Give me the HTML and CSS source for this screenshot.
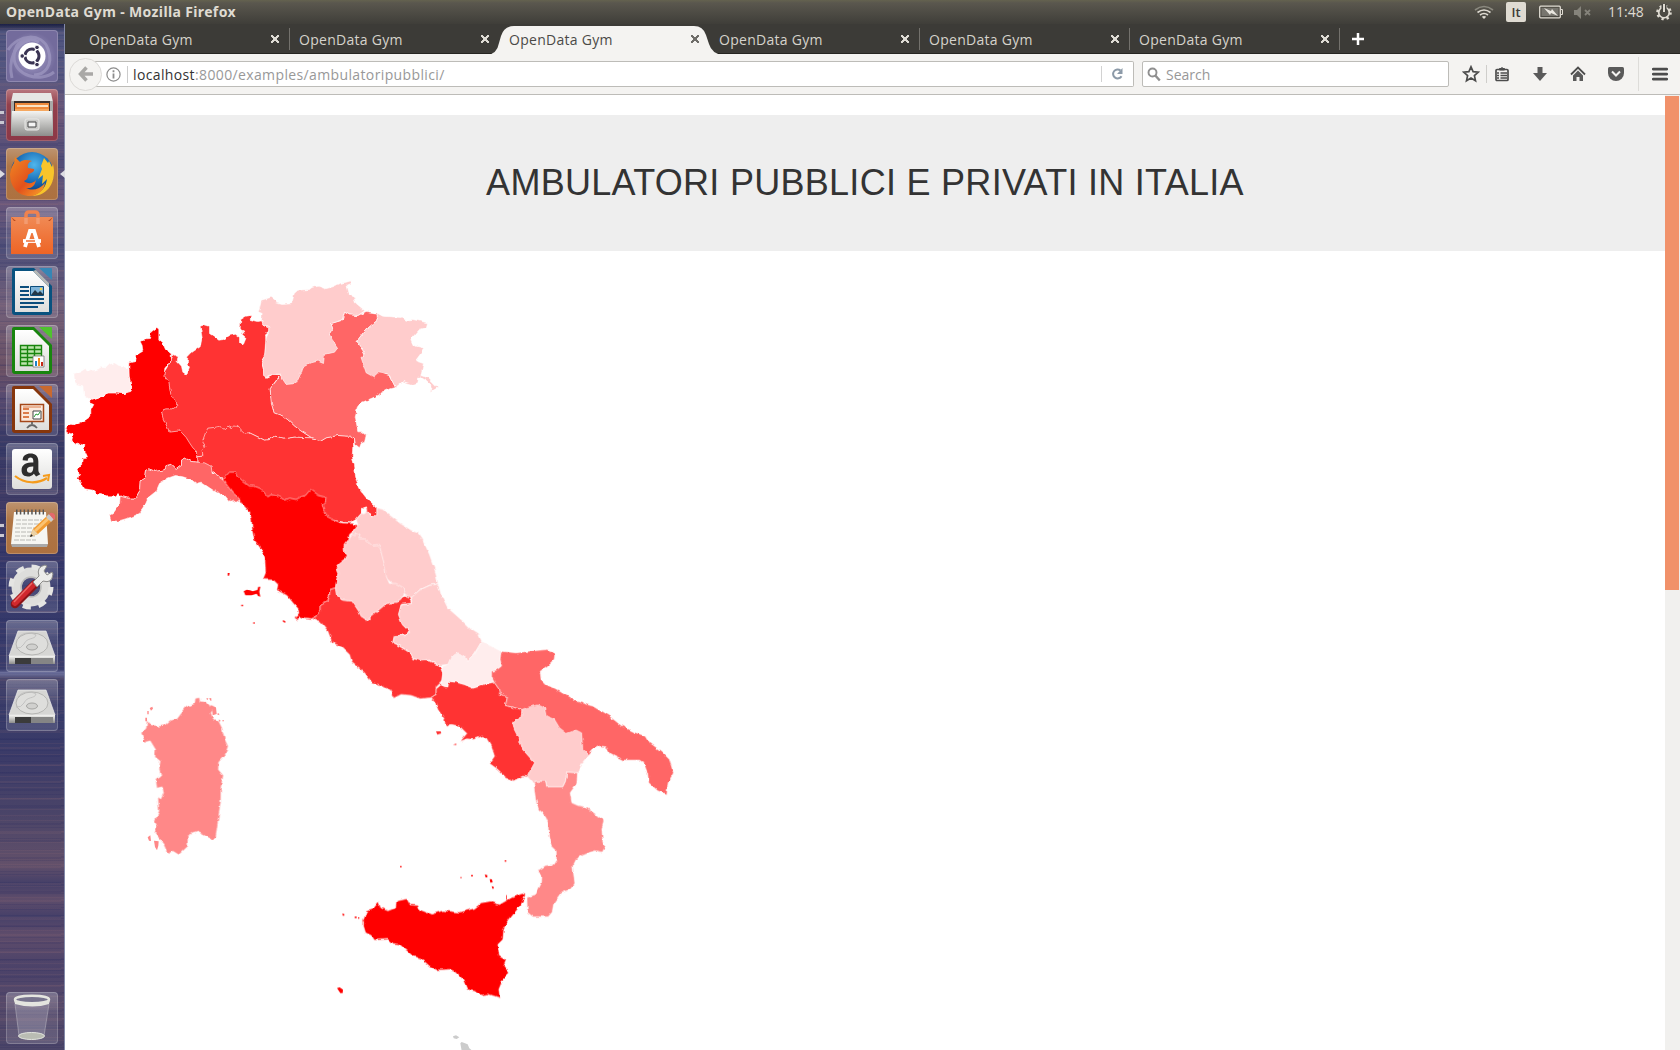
FILE: index.html
```html
<!DOCTYPE html>
<html lang="it">
<head>
<meta charset="utf-8">
<title>OpenData Gym</title>
<link rel="stylesheet" href="styles.css">
</head>
<body>
<svg class="defs" width="0" height="0" aria-hidden="true">
  <defs>
    <linearGradient id="metal" x1="0" y1="0" x2="0" y2="1"><stop offset="0" stop-color="#f4f4f2"/><stop offset="1" stop-color="#8d8d8b"/></linearGradient>
    <linearGradient id="paper" x1="0" y1="0" x2="0" y2="1"><stop offset="0" stop-color="#fff"/><stop offset="1" stop-color="#dededc"/></linearGradient>
    <linearGradient id="bag" x1="0" y1="0" x2="0" y2="1"><stop offset="0" stop-color="#f08a55"/><stop offset="1" stop-color="#ee6425"/></linearGradient>
    <radialGradient id="globe" cx=".55" cy=".3" r=".7"><stop offset="0" stop-color="#4fb6ec"/><stop offset=".6" stop-color="#1567b2"/><stop offset="1" stop-color="#0c2f70"/></radialGradient>
    <linearGradient id="fox" x1="0" y1="0" x2="1" y2="1"><stop offset="0" stop-color="#f08a24"/><stop offset=".55" stop-color="#e2511c"/><stop offset="1" stop-color="#f9a52a"/></linearGradient>
    <symbol id="disk" viewBox="0 0 52 52">
      <path d="M12 11h28l9 25H3z" fill="#d6d6d4" stroke="#eee" stroke-width=".7"/>
      <ellipse cx="26" cy="24" rx="16" ry="11" fill="#dededc" stroke="#b5b5b3"/><ellipse cx="26" cy="27" rx="5.500" ry="3" fill="#d0d0ce" stroke="#a5a5a3"/>
      <path d="M12 18c4-6 13-6 18-3-1 5-9 2-12 9q-3 5-8 4" fill="none" stroke="#bbb" stroke-width=".8"/>
      <path d="M3 36h46v8H3z" fill="url(#metal)"/><path d="M9 38h16v6H9z" fill="#3b3b3b"/><path d="M25 38h22v6H25z" fill="#858585"/>
    </symbol>
    <filter id="rough" x="0" y="0" width="100%" height="100%" color-interpolation-filters="sRGB">
      <feTurbulence type="fractalNoise" baseFrequency=".17" numOctaves="2" seed="4" result="n"/>
      <feDisplacementMap in="SourceGraphic" in2="n" scale="3.6" xChannelSelector="R" yChannelSelector="G"/>
    </filter>
  </defs>
</svg>

<header class="panel">
  <span class="panel-title">OpenData Gym - Mozilla Firefox</span>
  <div class="indicators">
    <svg class="wifi" width="20" height="24" viewBox="0 0 20 24"><g fill="none" stroke="#dfdbd2" stroke-width="1.6"><path d="M1 10q9-7 18 0" stroke="#8b897f"/><path d="M3.500 12.500q6.500-5 13 0M6 15q4-3 8 0"/></g><path d="M7.800 16.800q2.200-1.600 4.400 0L10 19z" fill="#dfdbd2"/></svg>
    <span class="kbd">It</span>
    <svg class="battery" width="24" height="24" viewBox="0 0 24 24"><rect x=".7" y="6.200" width="20.600" height="11.600" rx="1" fill="none" stroke="#dfdbd2" stroke-width="1.300"/><path d="M2.500 8h17v8h-17z" fill="#77756e"/><path d="M22 9.500h1.500v5H22" fill="none" stroke="#dfdbd2"/><path d="M5 8l7 3 1-2 6 7-7-3-1 2z" fill="#e9e6df"/></svg>
    <svg class="mute" width="18" height="24" viewBox="0 0 18 24"><path d="M0 10h3l4-4v13l-4-4H0z" fill="#85837b"/><path d="M11 10l5 5m0-5l-5 5" stroke="#85837b" stroke-width="1.800"/></svg>
    <span class="clock">11:48</span>
    <svg class="session" width="18" height="24" viewBox="0 0 18 24"><circle cx="9" cy="12.500" r="6.300" fill="none" stroke="#dfdbd2" stroke-width="3" stroke-dasharray="2.200 2.748"/><circle cx="9" cy="12.500" r="5.300" fill="none" stroke="#dfdbd2" stroke-width="1.700"/><path d="M9 4v8" stroke="#45443f" stroke-width="5"/><path d="M9 4v8" stroke="#dfdbd2" stroke-width="2"/></svg>
  </div>
</header>

<div class="desktop">
<nav class="launcher">
  <div class="tile dash"><svg viewBox="0 0 52 52"><g fill="none" stroke="#aaa4cb" stroke-width="3" opacity=".55"><path d="M2 20C12 4 36 2 42 19s-4 26-14 26"/><path d="M48 42C35 53 8 46 8 27S25 7 33 12"/><path d="M6 48C2 31 8 14 24 10"/></g><circle cx="26" cy="26" r="13.500" fill="#fff"/><circle cx="26" cy="26" r="7" fill="none" stroke="#3a3453" stroke-width="3" stroke-dasharray="12.800 1.860" stroke-dashoffset="6.400"/><g fill="#3a3453" stroke="#fff" stroke-width="1"><circle cx="16.200" cy="26" r="2.300"/><circle cx="31" cy="17.400" r="2.300"/><circle cx="31" cy="34.600" r="2.300"/></g></svg></div>
  <div class="tile files run2"><svg viewBox="0 0 52 52"><path d="M7 4h38l2 9H5z" fill="#e6e6e4"/><path d="M5 12h42v34H5z" fill="#a9a9a7"/><path d="M8 12h36v12H8z" fill="#3a302c"/><path d="M9 14h34v9H9z" fill="#ee8a3c"/><path d="M11 16h31v2H11z" fill="#fbe3c5"/><path d="M9 20h34v3H9z" fill="#f5a860"/><path d="M6 22h40l1 25H5z" fill="url(#metal)"/><rect x="19" y="30" width="14" height="11" rx="2" fill="#c9c9c7" stroke="#e9e9e7"/><path d="M22 33h8v5h-8z" fill="#f4f4f4" stroke="#444"/></svg></div>
  <div class="tile firefox run1 focus"><svg viewBox="0 0 52 52"><circle cx="26" cy="25.500" r="21.500" fill="url(#globe)"/><path d="M38 10l4 5 1-2 3 6 1-3c4 16-4 32-21 32 10-4 14-9 15-17l-5 5 1-9-5 4 4-10-1-3z" fill="#f8c42a"/><path d="M8 15l1-6 5 5c4-3 8-2 12-1-3 1-5 3-4 7l6 1c1 3-4 4-6 6 0 4-2 5-4 6 3 3 9 3 12-1-1 6-5 9-10 8 6 3 13 2 19-5-1 8-8 13-15 13C12 48 4 39 4 26c0-4 2-8 4-11z" fill="url(#fox)"/></svg></div>
  <div class="tile"><svg viewBox="0 0 52 52"><path d="M20 17V8q0-3 3-3h6q3 0 3 3v9" fill="none" stroke="#f0824e" stroke-width="3.500"/><path d="M5 10h42v37H5z" fill="url(#bag)"/><path d="M5 10l5 4h32l5-4-3 4H8z" fill="#b94a1c"/><path d="M20 17V11m12 6V11" stroke="#f39b70" stroke-width="3.500"/><g fill="none" stroke="#fff" stroke-width="3.800"><path d="M19 40l5-16h4l5 16"/><path d="M17 34h18"/></g><path d="M20 34h9" stroke="#ee6b30" stroke-width="1.500"/></svg></div>
  <div class="tile"><svg viewBox="0 0 52 52"><path d="M8 2h20l18 18v26q0 3-3 3H9q-3 0-3-3V4q0-2 2-2z" fill="#09527f"/><path d="M33 2h12q1 0 1 1v11z" fill="#3686b5"/><path d="M9 5h18l16 16v25H9z" fill="url(#paper)"/><path d="M27 5l16 16V17L30 4z" fill="#b8b8b6"/><path d="M14 21h9M14 25h9M14 29h9M14 33h24M14 37h24M14 41h18" stroke="#0b4d7c" stroke-width="2"/><path d="M24.500 20.500h13v9h-13z" fill="#7fb4d9" stroke="#0b4d7c"/><path d="M25 29l4-5 3 3 2-2 4 4z" fill="#233747"/><circle cx="35" cy="23" r="1.300" fill="#f5d44a"/></svg></div>
  <div class="tile"><svg viewBox="0 0 52 52"><path d="M8 2h20l18 18v26q0 3-3 3H9q-3 0-3-3V4q0-2 2-2z" fill="#18850e"/><path d="M33 2h12q1 0 1 1v11z" fill="#4fc22e"/><path d="M9 5h18l16 16v25H9z" fill="url(#paper)"/><path d="M14.500 20.500h21v20h-21zM14.500 24.500h21m-21 4h21m-21 4h21m-21 4h21M21.500 20v21m7-21v21" fill="#bde5ad" stroke="#18850e" stroke-width="1.400"/><path d="M27 31h11v11H27z" fill="#fff" stroke="#777" stroke-width=".8"/><path d="M29 36h2v5h-2z" fill="#1d83c7"/><path d="M32 33h2v8h-2z" fill="#f08b1c"/><path d="M35 37h2v4h-2z" fill="#c82816"/></svg></div>
  <div class="tile"><svg viewBox="0 0 52 52"><path d="M8 2h20l18 18v26q0 3-3 3H9q-3 0-3-3V4q0-2 2-2z" fill="#86360c"/><path d="M33 2h12q1 0 1 1v11z" fill="#c9692f"/><path d="M9 5h18l16 16v25H9z" fill="url(#paper)"/><path d="M14.500 20.500h23v17h-23z" fill="#fbe9dd" stroke="#a44719" stroke-width="1.500"/><path d="M17 24h6v2h-6zm0 4h6v2h-6zm0 4h6v2h-6z" fill="#dc7c4b"/><path d="M17 23h18" stroke="#dc7c4b"/><path d="M27 27h8v8h-8z" fill="#fff" stroke="#444"/><path d="M28 33l2-3 2 1 2-3" stroke="#2a9b35" fill="none"/><path d="M26 38v2m-5 4q5-6 10 0" fill="none" stroke="#666" stroke-width="1.800"/></svg></div>
  <div class="tile"><svg viewBox="0 0 52 52"><rect x="6" y="6" width="40" height="40" rx="3" fill="url(#paper)"/><path transform="translate(-2.600 -4) scale(1.120)" d="M33 31.500c-1.500-1.500-1.800-2.500-1.800-4.500v-7c0-5-3-7-7-7s-7 2-7 6l4.500.5c0-2 1-3 2.500-3s2.500 1 2.500 3v1.500c-6 0-10.500 1.500-10.500 7 0 4 2.500 5.500 5.500 5.500 2.500 0 4.200-.8 5.500-2.500l2 2.500zM26.700 24.500c0 4-1 5.700-3.200 5.700-1.600 0-2.500-1-2.500-2.700 0-2.500 2.700-3 5.700-3z" fill="#2d2d2d"/><path d="M9 33c10 8 23 8 32 2" fill="none" stroke="#f59b1b" stroke-width="2.200"/><path d="M37 33l6-1-1 6" fill="none" stroke="#f59b1b" stroke-width="2"/></svg></div>
  <div class="tile notes run2"><svg viewBox="0 0 52 52"><path d="M8 10h32l2 32H5z" fill="#f6f6f2"/><path d="M5 42h37l-1 3H6z" fill="#aaa"/><path d="M10 10h28" stroke="#555" stroke-width="5" stroke-dasharray="1.500 2.300"/><path d="M10 18h26M10 22h27M9 26h28M9 30h24M9 34h20M8 38h22" stroke="#b8b8b4" stroke-dasharray="5 1"/><path d="M24 35l3-8 15-14 5 5-15 14z" fill="#f29b31"/><path d="M28 28l15-14 2 2-15 14z" fill="#fbc372"/><path d="M24 35l3-8 5 5z" fill="#ecd2a5"/><path d="M24 35l1-3 2 2z" fill="#222"/><path d="M40 15l3-3 5 5-3 3z" fill="#c9c9c9"/><path d="M43 12q3-3 6 1v4l-1 1z" fill="#e3696b"/></svg></div>
  <div class="tile"><svg viewBox="0 0 52 52"><circle cx="25" cy="26" r="14.500" fill="none" stroke="#dededc" stroke-width="10"/><circle cx="25" cy="26" r="20" fill="none" stroke="#e5e5e3" stroke-width="5" stroke-dasharray="8 7.700"/><circle cx="25" cy="26" r="10" fill="none" stroke="#bcbcba" stroke-width="1.500"/><path d="M9 43L29 23" stroke="#8c1518" stroke-width="8.500" stroke-linecap="round"/><path d="M9 42L28 23" stroke="#d0282d" stroke-width="6" stroke-linecap="round"/><path d="M8 41L26 22" stroke="#e96a66" stroke-width="1.500"/><path d="M27 21L33 15Q30 6 39 4l2 1-3 5 3 4 5-3 1 2q-1 10-10 7l-6 6z" fill="#ececea" stroke="#8b8b89"/></svg></div>
  <div class="tile"><svg viewBox="0 0 52 52"><use href="#disk"/></svg></div>
  <div class="tile"><svg viewBox="0 0 52 52"><use href="#disk"/></svg></div>
  <div class="tile trash"><svg viewBox="0 0 52 52"><path d="M9 10h34l-5 34q-12 4-25 0z" fill="#d7d6e2" opacity=".22"/><path d="M9 12l4 32M43 12l-5 32" stroke="#d8d8dc" opacity=".4"/><ellipse cx="25.500" cy="44" rx="13" ry="3.500" fill="#b9bcb3" stroke="#e3e5df"/><ellipse cx="26" cy="7.500" rx="17" ry="3.800" fill="#77738d" stroke="#e5e6e0" stroke-width="2.500"/><path d="M8 8q18 7 36 0l-1 4q-16 5-34 0z" fill="#e4e5df"/></svg></div>
</nav>

<main class="browser">
  <div class="tabs">
    <div class="tab"><span>OpenData Gym</span><i class="x"></i></div>
    <div class="tab"><span>OpenData Gym</span><i class="x"></i></div>
    <div class="tab active"><svg class="tab-shape" width="236" height="29" viewBox="0 0 236 29"><path d="M0 29Q10 28 12 17L14 10Q17 0 27 0H207Q216 0 219 9L222 18Q225 28 236 29z" fill="#f4f3f1"/></svg><span>OpenData Gym</span><i class="x"></i></div>
    <div class="tab"><span>OpenData Gym</span><i class="x"></i></div>
    <div class="tab"><span>OpenData Gym</span><i class="x"></i></div>
    <div class="tab"><span>OpenData Gym</span><i class="x"></i></div>
    <svg class="newtab" width="14" height="14" viewBox="0 0 14 14"><path d="M7 1v12M1 7h12" stroke="#fff" stroke-width="2.500"/></svg>
  </div>
  <div class="toolbar">
    <div class="back"><svg width="16" height="16" viewBox="0 0 16 16"><path d="M8.500 1.500L2.500 8l6 6.500M3 8h12" fill="none" stroke="#a9a8a6" stroke-width="3.500"/></svg></div>
    <div class="url">
      <svg class="info" width="15" height="15" viewBox="0 0 15 15"><circle cx="7.500" cy="7.500" r="6.600" fill="none" stroke="#8c8c8c" stroke-width="1.200"/><path d="M7.500 6.500v5M7.500 3.200v2" stroke="#8c8c8c" stroke-width="1.800"/></svg>
      <span class="address"><b>localhost</b>:8000/examples/ambulatoripubblici/</span>
      <span class="reload"><svg width="13" height="14" viewBox="0 0 13 14"><path d="M10.500 9.200A4.500 4.500 0 1 1 9.500 3.500" fill="none" stroke="#8c9aa8" stroke-width="2"/><path d="M11.500 1v6H6z" fill="#8c9aa8"/></svg></span>
    </div>
    <div class="search"><svg width="14" height="15" viewBox="0 0 14 15"><circle cx="5.500" cy="5.500" r="4" fill="none" stroke="#8f8f8f" stroke-width="1.900"/><path d="M8.300 8.500l4.500 5" stroke="#8f8f8f" stroke-width="2.400"/></svg><span>Search</span></div>
    <div class="tools">
      <span class="tool star"><svg width="18" height="18" viewBox="0 0 18 18"><path d="M9 1.800l2.100 4.800 5.200.5-3.900 3.500 1.100 5.200L9 13.100l-4.500 2.700 1.100-5.200-3.900-3.500 5.200-.5z" fill="none" stroke="#4c4c4c" stroke-width="1.700"/></svg></span>
      <span class="tool list"><svg width="16" height="16" viewBox="0 0 16 16"><path d="M2 4.500q0-1 1-1h10q1 0 1 1v9q0 1-1 1H3q-1 0-1-1z" fill="none" stroke="#4c4c4c" stroke-width="1.700"/><path d="M5.500 4V2.500h1.500Q8 .3 9 2.500h1.500V4z" fill="#4c4c4c" stroke="#4c4c4c"/><path d="M3 7h2m1.500 0H13M3 9.500h2m1.500 0H13M3 12h2m1.500 0H13" stroke="#4c4c4c" stroke-width="1.300"/></svg></span>
      <span class="tool"><svg width="16" height="16" viewBox="0 0 16 16"><path d="M5.500 1h5v6H15l-7 8-7-8h4.500z" fill="#5a5a5a"/></svg></span>
      <span class="tool"><svg width="16" height="16" viewBox="0 0 16 16"><path d="M1 8.500l7-7 7 7" fill="none" stroke="#4c4c4c" stroke-width="1.800"/><path d="M3 9.500l5-5 5 5V15H9.500v-4h-3v4H3z" fill="#5a5a5a"/></svg></span>
      <span class="tool"><svg width="16" height="16" viewBox="0 0 16 16"><path d="M1.500 1h13q1.500 0 1.500 1.500V7A8 8 0 0 1 0 7V2.500Q0 1 1.500 1z" fill="#5a5a5a"/><path d="M4 5.500L8 9.500l4-4" fill="none" stroke="#f4f3f1" stroke-width="2"/></svg></span>
      <span class="tool menu"><svg width="16" height="15" viewBox="0 0 16 15"><path d="M1.300 2.200h13.400M1.300 7.200h13.400M1.300 12.200h13.400" stroke="#4c4c4c" stroke-width="2.800" stroke-linecap="round"/></svg></span>
    </div>
  </div>

  <div class="viewport">
    <div class="page">
      <div class="jumbotron"><h1>AMBULATORI PUBBLICI E PRIVATI IN ITALIA</h1></div>
      <svg class="map" width="1600" height="799" viewBox="65 251 1600 799">
        <g filter="url(#rough)"><g class="regions" transform="translate(59.500 269.500) scale(.333333)">
          <path class="l5" d="M336 272L340 255 356 262 353 276 366 290 370 308 382 316 390 296 383 285 385 262 398 248 422 232 428 205 422 170 436 166 450 170 450 192 462 200 478 212 492 210 510 198 528 194 540 204 540 220 552 224 560 205 548 195 556 185 542 178 544 150 560 140 574 138 572 150 596 156 607 154 612 165 628 172 628 188 618 196 620 220 615 260 606 275 612 300 614 318 624 323 640 314 662 316 632 358 636 402 644 430 672 440 690 455 706 470 724 484 757 505 740 505 705 503 680 507 645 500 630 510 615 512 597 503 570 490 430 560 412 562 300 500 300 330Z"/>
          <path class="l5" d="M412 562L430 560 428 545 436 530 426 515 430 512 438 490 445 476 462 474 480 470 495 480 505 470 520 478 530 468 545 480 555 490 570 490 597 503 615 512 630 510 645 500 680 507 705 503 757 505 770 508 782 516 800 505 835 498 870 500 885 508 885 527 880 535 878 560 885 585 888 620 897 655 920 685 952 714 953 738 945 744 932 732 920 730 918 712 906 716 906 732 890 750 872 760 855 758 620 720 490 628 412 578Z"/>
          <path class="l6" d="M292 174L298 179 298 212 310 222 318 240 335 253 336 272 316 296 313 320 328 340 334 375 349 398 355 408 340 418 322 418 306 424 310 445 322 470 330 488 362 484 380 504 390 520 400 535 411 545 412 578 395 576 378 566 366 572 366 588 350 600 334 585 322 588 316 600 288 606 268 598 258 603 255 625 242 634 240 665 228 686 205 686 182 680 176 672 165 682 140 682 125 672 112 673 100 662 75 658 66 640 55 628 60 612 52 600 66 590 68 565 84 562 74 540 76 527 62 524 45 524 34 512 38 495 24 488 17 473 34 464 48 467 62 460 80 450 94 440 94 422 103 405 90 400 92 391 125 380 146 370 165 370 192 372 214 362 216 355 208 320 208 280 228 276 232 256 250 245 248 228 242 216 258 208 270 207 274 188Z"/>
          <path class="l1" d="M43 313L60 308 78 297 84 307 118 298 122 293 140 295 150 284 165 280 178 288 190 290 208 298 209 320 216 355 214 366 192 372 165 370 146 370 125 380 92 391 85 386 73 378 70 352 52 348 45 335Z"/>
          <path class="l4" d="M150 738L162 730 180 705 182 680 205 686 228 686 240 665 242 634 255 625 258 603 268 598 288 606 316 600 322 588 334 585 350 600 366 588 366 572 378 566 395 576 412 578 435 580 455 590 458 612 470 615 490 628 515 650 525 670 543 690 530 698 515 690 508 696 495 680 470 668 450 655 425 638 410 642 395 630 370 622 348 618 325 626 300 642 290 665 265 685 252 715 240 732 215 743 175 755 155 754Z"/>
          <g transform="translate(570 0)">
            <path class="l4" d="M95 315L62 358 66 402 74 430 102 440 120 455 136 470 154 484 187 505 200 508 212 516 230 505 265 498 300 500 315 508 318 525 330 535 335 522 345 518 350 498 340 490 325 490 322 465 317 440 325 410 335 400 370 385 410 362 438 354 420 318 400 312 335 265 345 245 322 215 345 185 362 170 384 152 383 131 350 126 325 138 300 136 285 128 278 152 245 162 250 180 240 195Z"/>
            <path class="l2" d="M305 34L302 45 290 50 296 72 312 82 318 100 330 110 346 124 325 138 300 136 285 128 278 152 245 162 250 180 240 195 248 210 265 235 255 248 225 255 222 282 205 275 185 280 160 293 155 310 140 342 110 345 100 330 92 314 70 314 50 323 42 318 42 300 36 275 46 258 48 222 50 205 58 188 58 172 40 164 36 150 38 135 26 130 35 92 50 88 65 83 78 92 78 100 98 105 125 103 130 90 134 72 145 62 180 60 186 55 206 50 228 58 250 52 272 42 290 38Z"/>
            <path class="l2" d="M384 152L383 131 400 140 455 144 470 152 490 150 534 160 530 175 510 180 484 210 492 228 524 236 514 252 498 274 522 282 514 318 535 325 564 355 545 366 548 352 530 335 508 322 505 340 490 345 460 336 438 354 420 318 400 312 385 310 372 322 350 310 335 265 345 245 322 215 345 185 362 170Z"/>
          </g>
          <g transform="translate(420 510)">
            <path class="l6" d="M70 120L90 98 110 98 115 110 130 125 150 140 165 140 185 148 205 172 215 166 240 172 255 182 270 176 290 180 305 172 318 168 333 150 350 162 358 168 380 174 378 188 368 195 372 210 380 230 400 240 425 250 460 252 476 258 465 272 450 285 448 300 434 318 436 340 445 352 415 375 410 385 416 400 408 445 392 450 390 468 385 485 362 498 362 515 350 530 338 538 318 536 300 532 295 542 284 534 298 525 296 508 280 490 262 468 232 452 235 435 222 422 190 420 198 400 196 355 185 330 163 300 158 270 155 235 145 212 123 188 118 175 100 160 85 140Z"/>
            <path class="l5" d="M338 538L350 530 362 515 362 498 385 485 390 468 392 450 408 445 412 470 430 482 458 485 478 515 485 530 503 542 530 518 560 492 590 488 605 478 614 468 630 472 636 492 605 495 598 525 610 555 628 575 620 586 585 590 580 610 600 620 632 640 640 658 665 660 690 665 720 678 730 700 728 722 710 740 710 765 695 775 662 778 635 768 605 765 583 776 570 752 545 738 518 730 495 700 457 670 450 645 425 622 398 610 385 575 365 550Z"/>
            <path class="l2" d="M476 258L470 240 485 222 505 218 520 232 532 225 533 205 550 210 600 250 635 272 657 282 670 300 690 345 706 390 716 433 690 438 660 452 640 475 625 470 614 462 540 400 455 285 465 272Z"/>
            <path class="l2" d="M455 285L470 290 470 280 482 285 478 298 495 298 520 320 540 318 548 350 556 380 560 410 570 432 590 432 612 445 614 462 605 478 590 488 560 492 530 518 503 542 485 530 478 515 458 485 430 482 412 470 408 445 416 400 410 385 415 375 445 352 436 340 434 318 448 300Z"/>
          </g>
          <g transform="translate(960 870)">
            <path class="l2" d="M176 73L150 78 120 92 95 115 97 132 65 137 57 165 68 195 90 215 80 228 45 228 40 250 60 258 92 280 100 295 125 305 150 302 180 318 205 315 263 303 280 290 307 245 298 225 275 210 250 185 205 145 185 105Z"/>
            <path class="l5" d="M186 372L192 380 205 382 207 365 230 368 255 375 280 386 300 380 320 372 344 368 356 385 360 402 384 412 378 438 428 450 425 475 400 488 405 510 420 540 430 570 466 610 452 635 444 652 430 650 402 664 380 655 355 630 330 612 345 590 335 560 320 535 308 530 280 540 262 538 242 546 262 522 240 500 215 495 198 504 195 480 175 450 165 425 155 414 170 405 170 385Z"/>
            <path class="l1" d="M307 245L335 260 364 275 362 300 366 320 350 332 336 335 336 352 344 368 320 372 300 380 280 386 255 375 230 368 207 365 205 382 192 380 186 368 190 345 186 322 205 315 215 292 235 280 255 288 263 303 285 285Z"/>
            <path class="l4" d="M364 275L410 280 450 275 505 270 520 276 526 286 524 300 505 318 482 336 485 360 500 375 540 395 590 425 640 440 690 470 725 498 770 520 800 530 812 550 845 575 870 600 882 640 866 670 862 704 835 694 808 670 804 640 792 610 780 602 730 602 690 582 680 562 660 560 640 570 628 585 560 560 500 480 428 450 378 438 384 412 360 402 356 385 344 368 336 352 336 335 350 332 366 320 362 300Z"/>
            <path class="l2" d="M428 450L440 445 475 436 495 445 500 470 525 480 540 505 562 522 590 512 606 520 610 572 628 585 605 615 594 640 562 638 558 665 550 682 502 682 498 665 468 666 462 672 444 652 452 635 466 610 430 570 420 540 405 510 400 488 425 475Z"/>
          </g>
          <g transform="translate(780 1470)">
            <path class="l3" d="M642 72L648 66 678 65 682 82 730 82 738 65 742 38 774 40 772 72 752 100 757 130 775 138 798 142 830 165 853 184 847 210 850 245 858 262 848 278 825 274 790 288 770 300 760 320 766 372 752 390 725 402 702 435 698 458 686 472 640 472 623 458 622 414 648 405 666 370 667 350 652 335 678 318 700 316 710 300 710 275 695 260 687 230 685 190 675 165 657 150 648 120Z"/>
            <path class="l6" d="M132 480L140 455 160 448 178 426 184 445 205 454 228 445 230 425 262 418 272 436 296 438 300 450 335 464 370 453 420 458 465 446 485 430 512 425 540 435 575 415 608 402 618 406 605 435 570 480 553 510 550 540 535 555 540 590 560 602 553 620 570 640 550 660 538 690 542 716 525 710 505 704 485 708 470 697 442 690 430 660 410 638 390 630 352 632 330 620 305 598 280 590 255 568 240 555 218 552 205 540 165 542 155 528 138 520 132 500Z"/>
          </g>
          <path class="l3" transform="translate(180 1230)" d="M82 122L92 135 118 140 140 135 155 122 172 118 200 82 225 72 228 56 240 54 242 65 258 66 270 80 275 76 288 82 275 100 282 118 298 125 308 145 316 178 326 200 318 225 298 248 297 270 312 288 305 320 304 370 298 410 290 470 280 480 268 475 235 458 220 462 205 470 206 500 178 526 160 515 145 524 130 490 105 460 112 440 105 425 118 395 115 352 124 358 132 340 128 322 112 326 108 298 124 288 118 265 122 245 106 232 108 210 92 184 78 188 68 160 80 145Z"/>
        </g></g>
        <g class="islands" transform="translate(60 270) scale(.333333)">
          <path class="l6" transform="translate(420 510)" d="M131 454L140 449 150 451 158 454 172 450 175 440 181 440 178 455 181 470 174 468 170 461 155 466 136 466zM83 399h6l-2 8h-4zM124 494h5v5h-5zM160 547h4v4h-4zM249 540l7 4-1 5-6-4z"/>
          <path class="l5" transform="translate(960 870)" d="M168 514l14 0 2 6-12 4zM219 554l10-3v4z"/>
          <path class="l6" transform="translate(780 1470)" d="M51 684l8-2 10 7-1 10h-7zM67 461l6 1v5h-5zM104 470h6v4h-6zM114 472h4v4h-4zM128 480h4v3h-4zM240 318h5v4h-5zM554 301h5v4h-5zM453 345h6v4h-6zM421 351h4v3h-4zM494 344l8 1v7h-5zM509 357l7 1 2 9-7 1zM515 378l7 3-1 5h-4zM559 405h2v14h-2z"/>
          <path class="l3" transform="translate(180 1230)" d="M89 84l8-4 2 6-6 6zM82 93h4v10h-4zM76 113h5v11h-5zM69 180h7v6h-7zM83 472l8-6 2 17-6-1zM102 482l14 2-1 13-4 14-6-10zM258 56l7-2-2 6zM268 54l6 1v8l-4-2zM276 80l12 2 2 20-12 4zM290 102l7-2 1 6zM296 118l6 4-3 4zM307 121h5v3h-5z"/>
          <path class="sea" transform="translate(780 1470)" d="M399 829l9-3 10 6-8 5-9-2zM421 850l4-4 18 7 5 12 10 8-2 5h-30z"/>
          <path class="sm" transform="translate(420 510)" d="M484 209l16-7 1 12-10 9-7-3z"/>
        </g>
      </svg>
    </div>
    <div class="scrollbar"><div class="thumb"></div></div>
  </div>
</main>
</div>
</body>
</html>
```

FILE: styles.css
```css
* { box-sizing: border-box; }
html, body { margin: 0; width: 1680px; height: 1050px; overflow: hidden; }
body { font-family: "Open Sans", "Noto Sans", sans-serif; font-size: 14px; background: #fff; }
svg { display: block; }
.defs { position: absolute; }

.panel { height: 24px; display: flex; justify-content: space-between; align-items: center; padding: 0 7px 0 6px; color: #dfdbd2; background: linear-gradient(#64624f 0, #5a574e 3px, #3f3e39 100%); }
.panel-title { font-family: "Noto Sans", sans-serif; font-weight: 700; font-size: 14px; line-height: 24px; letter-spacing: .36px; }
.indicators { display: flex; align-items: center; height: 24px; }
.kbd { width: 20px; height: 20px; margin-left: 12px; border-radius: 2px; background: #dfdbd2; color: #3c3b37; font-size: 13px; line-height: 20px; text-align: center; font-weight: 600; }
.battery { margin-left: 13px; }
.mute { margin-left: 11px; }
.clock { width: 36px; margin-left: 16px; letter-spacing: 0; line-height: 24px; white-space: nowrap; }
.session { margin-left: 11px; }

.desktop { display: flex; height: 1026px; }
.launcher { width: 65px; padding: 6px 0 6px 6px; display: flex; flex-direction: column; gap: 7px; border-right: 1px solid #8389a8;
  background: repeating-linear-gradient(rgba(30,35,90,.14) 0 1px, transparent 1px 4px, rgba(170,120,120,.1) 4px 5px, transparent 5px 11px),
  repeating-linear-gradient(179.5deg, rgba(25,30,90,.12) 0 2px, transparent 2px 9px, rgba(170,120,120,.1) 9px 11px, transparent 11px 17px),
  linear-gradient(#1c2040 0, #50557f 8px, #545680 50px, #6b5778 90px, #504d78 135px, #69577b 180px, #4d4e78 225px, #72607a 280px, #695064 345px, #594b70 370px, #373a66 420px, #3f3b65 480px, #33376a 550px, #393c6b 645px, #7275a0 649px, #45436b 655px, #373b69 690px, #3c3b68 735px, #4a4468 790px, #62506a 840px, #443f68 860px, #5f4d6b 875px, #464069 892px, #5e4c6b 910px, #4b4269 945px, #574a6a 980px, #4b4568 100%); }
.tile { position: relative; flex: none; width: 52px; height: 52px; border-radius: 4px; background: linear-gradient(rgba(255,255,255,.26), rgba(255,255,255,.08) 45%, rgba(255,255,255,.13)); box-shadow: inset 0 0 0 1px rgba(255,255,255,.2); }
.tile > svg { width: 52px; height: 52px; }
.dash { background: radial-gradient(#a9a3cc, #736b9c 65%); }
.files { background: linear-gradient(#b9787f, #93404c 30%, #8c3847); }
.firefox, .notes { background: linear-gradient(#bd9470, #b07645 35%, #ad7140); }
.trash { margin-top: auto; }
.run1::before, .focus::after, .run2::before { content: ""; position: absolute; top: 22px; left: -6px; border: 4px solid transparent; border-left: 5px solid #dcdce2; }
.focus::after { left: auto; right: -7px; border-left: 0; border-right: 5px solid #dcdce2; }
.run2::before { border: 0; width: 4px; height: 7px; border-top: 3px solid #c9c8d2; border-bottom: 3px solid #c9c8d2; }

.browser { width: 1615px; display: flex; flex-direction: column; }
.tabs { height: 30px; padding-left: 15px; display: flex; align-items: center; background: #3c3b37; border-bottom: 1px solid #262521; color: #d6d3cc; }
.tab { position: relative; width: 210px; height: 22px; display: flex; align-items: center; padding: 1px 10px 0 9px; border-right: 1px solid #73716c; }
.tab span { flex: 1; position: relative; white-space: nowrap; letter-spacing: .28px; line-height: 21px; }
.tab:nth-child(2), .tab.active { border-color: transparent; }
.tab.active { color: #4b4a47; }
.tab-shape { position: absolute; left: -13px; top: -2px; }
.x { position: relative; width: 8px; height: 8px; background: linear-gradient(45deg, transparent 39%, #dedbd4 39% 61%, transparent 61%), linear-gradient(-45deg, transparent 39%, #dedbd4 39% 61%, transparent 61%); }
.active .x { background: linear-gradient(45deg, transparent 39%, #6e6d69 39% 61%, transparent 61%), linear-gradient(-45deg, transparent 39%, #6e6d69 39% 61%, transparent 61%); }
.newtab { margin-left: 11px; }

.toolbar { height: 41px; flex: none; display: flex; align-items: center; background: #f4f3f1; border-bottom: 1px solid #bdbcb8; }
.back { position: relative; z-index: 1; width: 33px; height: 33px; margin-left: 4px; border-radius: 50%; border: 1px solid #dcdad7; background: #f4f3f1; display: grid; place-items: center; }
.url { width: 1039px; height: 26px; margin-left: -7px; padding-left: 11px; display: flex; align-items: center; background: #fff; border: 1px solid #bdbcb8; border-left: 0; border-radius: 0 2px 2px 0; }
.address { margin-left: 6px; padding: 1px 0 0 5px; border-left: 1px solid #ccc; color: #989898; line-height: 16px; letter-spacing: .37px; white-space: nowrap; }
.address b { font-weight: 400; color: #333; }
.reload { width: 32px; height: 16px; margin-left: auto; border-left: 1px solid #d2d2d2; display: grid; place-items: center; }
.search { width: 307px; height: 26px; margin-left: 8px; padding-left: 4px; display: flex; align-items: center; gap: 5px; background: #fff; border: 1px solid #bdbcb8; border-radius: 2px; color: #989898; }
.search span { padding-top: 1px; line-height: 22px; }
.tools { flex: 1; height: 38px; display: flex; align-items: center; padding-left: 7px; }
.tool { flex: none; width: 38px; height: 34px; display: grid; place-items: center; }
.star { width: 31px; height: 18px; border-right: 1px solid #cfcecb; }
.list { width: 30px; margin-right: 4px; }
.menu { width: 42px; margin-left: 3px; border-left: 1px solid #dddcd9; }

.viewport { flex: 1; min-height: 0; display: flex; background: #fff; }
.page { width: 1600px; padding-top: 20px; }
.jumbotron { height: 136px; background: #eee; display: flex; align-items: center; justify-content: center; }
h1 { margin: 0; font: 400 36px/40px "Liberation Sans", Arial, sans-serif; letter-spacing: .28px; color: #333; white-space: nowrap; }
.scrollbar { width: 15px; padding: 1px 1px 0 0; background: #f1f0ee; }
.thumb { height: 494px; background: #f1916a; }

.regions path { stroke: #fff; stroke-opacity: .72; stroke-width: 2.4; stroke-linejoin: round; }
.l1 { fill: #ffeded; }
.l2 { fill: #fcc; }
.l3 { fill: #f88; }
.l4 { fill: #f66; }
.l5 { fill: #f33; }
.l6 { fill: #f00; }
.sea { fill: #ccc; }
.sm { fill: #fff; }
```
